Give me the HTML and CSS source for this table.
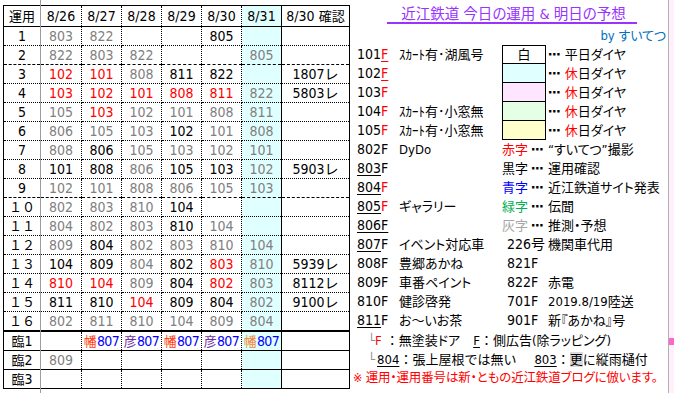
FILE: index.html
```html
<!DOCTYPE html>
<html lang="ja">
<head>
<meta charset="utf-8">
<title>近江鉄道 今日の運用 &amp; 明日の予想</title>
<link rel="stylesheet" href="styles.css">
</head>
<body>
<div class="page">
  <table class="unyo">
    <colgroup>
      <col class="c0"><col class="c1"><col class="cd"><col class="cd"><col class="cd"><col class="cd"><col class="cy"><col class="cc">
    </colgroup>
    <thead>
      <tr><th><span class="j">運用</span></th><th>8/26</th><th>8/27</th><th>8/28</th><th>8/29</th><th>8/30</th><th>8/31</th><th>8/30 <span class="j">確認</span></th></tr>
    </thead>
    <tbody>
      <tr><td>1</td><td class="g">803</td><td class="g">822</td><td></td><td></td><td>805</td><td></td><td></td></tr>
      <tr class="dash"><td>2</td><td class="g">822</td><td class="g">803</td><td class="g">822</td><td></td><td></td><td class="g">805</td><td></td></tr>
      <tr><td>3</td><td class="r">102</td><td class="r">101</td><td class="g">808</td><td>811</td><td>822</td><td></td><td>1807レ</td></tr>
      <tr><td>4</td><td class="r">103</td><td class="r">102</td><td class="r">101</td><td class="r">808</td><td class="r">811</td><td class="g">822</td><td>5803レ</td></tr>
      <tr><td>5</td><td class="g">105</td><td class="r">103</td><td class="g">102</td><td class="g">101</td><td class="g">808</td><td class="g">811</td><td></td></tr>
      <tr><td>6</td><td class="g">806</td><td class="g">105</td><td class="g">103</td><td>102</td><td class="g">101</td><td class="g">808</td><td></td></tr>
      <tr><td>7</td><td class="g">808</td><td>806</td><td class="g">105</td><td class="g">103</td><td class="g">102</td><td class="g">101</td><td></td></tr>
      <tr><td>8</td><td>101</td><td>808</td><td class="g">806</td><td>105</td><td>103</td><td class="g">102</td><td>5903レ</td></tr>
      <tr class="dash"><td>9</td><td class="g">102</td><td class="g">101</td><td class="g">808</td><td class="g">806</td><td class="g">105</td><td class="g">103</td><td></td></tr>
      <tr><td><span class="j">１０</span></td><td class="g">802</td><td class="g">803</td><td class="g">810</td><td>104</td><td></td><td></td><td></td></tr>
      <tr><td><span class="j">１１</span></td><td class="g">804</td><td class="g">802</td><td class="g">803</td><td>810</td><td class="g">104</td><td></td><td></td></tr>
      <tr><td><span class="j">１２</span></td><td class="g">809</td><td>804</td><td class="g">802</td><td class="g">803</td><td class="g">810</td><td class="g">104</td><td></td></tr>
      <tr><td><span class="j">１３</span></td><td>104</td><td>809</td><td class="g">804</td><td>802</td><td class="r">803</td><td class="g">810</td><td>5939レ</td></tr>
      <tr><td><span class="j">１４</span></td><td class="r">810</td><td class="r">104</td><td class="g">809</td><td>804</td><td class="r">802</td><td class="g">803</td><td>8112レ</td></tr>
      <tr><td><span class="j">１５</span></td><td>811</td><td>810</td><td class="r">104</td><td>809</td><td>804</td><td class="g">802</td><td>9100レ</td></tr>
      <tr class="end"><td><span class="j">１６</span></td><td class="g">802</td><td class="g">811</td><td class="g">810</td><td class="g">104</td><td class="g">809</td><td class="g">804</td><td></td></tr>
      <tr class="rin"><td><span class="j">臨</span>1</td><td></td><td><span class="j o">幡</span><span class="b">807</span></td><td><span class="j p">彦</span><span class="b">807</span></td><td><span class="j o">幡</span><span class="b">807</span></td><td><span class="j p">彦</span><span class="b">807</span></td><td><span class="j o2">幡</span><span class="b">807</span></td><td></td></tr>
      <tr class="rin"><td><span class="j">臨</span>2</td><td class="g">809</td><td></td><td></td><td></td><td></td><td></td><td></td></tr>
      <tr class="rin"><td><span class="j">臨</span>3</td><td></td><td></td><td></td><td></td><td></td><td></td><td></td></tr>
    </tbody>
  </table>

  <div class="legend">
    <div class="title"><span>近江鉄道 今日の運用 &amp; 明日の予想</span></div>
    <div class="by">by すいてつ</div>

    <div class="no">101<span class="r ul">F</span></div><div class="ds">ｽｶｰﾄ有･湖風号</div><div class="box first bw">白</div><div class="tx"><span class="dots">⋯</span> 平日ダイヤ</div>
    <div class="no">102<span class="r ul">F</span></div><div class="ds"></div><div class="box bc"></div><div class="tx"><span class="dots">⋯</span> <span class="r">休</span>日ダイヤ</div>
    <div class="no">103<span class="r">F</span></div><div class="ds"></div><div class="box bp"></div><div class="tx"><span class="dots">⋯</span> <span class="r">休</span>日ダイヤ</div>
    <div class="no">104<span class="r">F</span></div><div class="ds">ｽｶｰﾄ有･小窓無</div><div class="box bg"></div><div class="tx"><span class="dots">⋯</span> <span class="r">休</span>日ダイヤ</div>
    <div class="no">105<span class="r">F</span></div><div class="ds">ｽｶｰﾄ有･小窓無</div><div class="box by2"></div><div class="tx"><span class="dots">⋯</span> <span class="r">休</span>日ダイヤ</div>

    <div class="no">802F</div><div class="ds">DyDo</div><div class="c3"><span class="r">赤字</span><span class="dots">⋯</span></div><div class="tx">“すいてつ”撮影</div>
    <div class="no"><span class="ul">803</span>F</div><div class="ds"></div><div class="c3">黒字<span class="dots">⋯</span></div><div class="tx">運用確認</div>
    <div class="no"><span class="ul">804</span><span class="r">F</span></div><div class="ds"></div><div class="c3"><span class="b">青字</span><span class="dots">⋯</span></div><div class="tx">近江鉄道サイト発表</div>
    <div class="no"><span class="ul">805</span><span class="r">F</span></div><div class="ds">ギャラリー</div><div class="c3"><span class="gr">緑字</span><span class="dots">⋯</span></div><div class="tx">伝聞</div>
    <div class="no"><span class="ul">806F</span></div><div class="ds"></div><div class="c3"><span class="lg">灰字</span><span class="dots">⋯</span></div><div class="tx">推測・予想</div>

    <div class="no"><span class="ul">807</span>F</div><div class="ds">イベント対応車</div><div class="c3 num">226号</div><div class="tx">機関車代用</div>
    <div class="no">808F</div><div class="ds">豊郷あかね</div><div class="c3 num">821F</div><div class="tx"></div>
    <div class="no">809F</div><div class="ds">車番ペイント</div><div class="c3 num">822F</div><div class="tx">赤電</div>
    <div class="no">810F</div><div class="ds">健診啓発</div><div class="c3 num">701F</div><div class="tx">2019.8/19陸送</div>
    <div class="no"><span class="ul">811</span>F</div><div class="ds">お～いお茶</div><div class="c3 num">901F</div><div class="tx">新『あかね』号</div>

    <div class="note"><span class="gy">└</span><span class="r">F</span><span class="col c1">：</span>無塗装ドア<span class="gap"></span><span class="ul">F</span><span class="col">：</span>側広告(除ラッピング)</div>
    <div class="note n2"><span class="gy">└</span><span class="ul">804</span><span class="col">：</span>張上屋根では無い<span class="gap2"></span><span class="ul">803</span><span class="col">：</span><span class="hl">更</span>に縦雨樋付</div>
    <div class="warn">※ 運用・運用番号は新・ともの近江鉄道ブログに倣います。</div>
  </div>

  <div class="strip"><span class="mark"></span></div>
</div>
</body>
</html>
```

FILE: styles.css
```css
* { box-sizing: border-box; }
html, body { margin: 0; background: #fff; }
body {
  width: 674px;
  height: 393px;
  overflow: hidden;
  font-family: "DejaVu Sans Condensed", "Noto Sans CJK JP", sans-serif;
  color: #000;
}
.page {
  position: relative;
  display: flex;
  align-items: flex-start;
  height: 393px;
  padding: 5px 0 0 3px;
}
.page::before {
  content: "";
  position: absolute;
  left: 40px;
  top: 0;
  bottom: 0;
  width: 1px;
  background: #9c9c9c;
}

/* ---------- table ---------- */
.unyo {
  flex: 0 0 346px;
  width: 346px;
  border-collapse: collapse;
  table-layout: fixed;
  border: 1px solid #000;
  font-size: 14px;
}
.unyo col.c0 { width: 37px; }
.unyo col.c1 { width: 41px; }
.unyo col.cd { width: 40px; }
.unyo col.cy { width: 40px; background: #e0ffff; }
.unyo col.cc { width: 68px; }
.unyo th, .unyo td {
  padding: 0;
  height: 19px;
  line-height: 17px;
  text-align: center;
  vertical-align: middle;
  white-space: nowrap;
  font-weight: normal;
  border: 1px dotted #000;
}
.unyo thead th { height: 21px; border-top: 1px solid #000; border-bottom: 1px solid #000; }
.unyo tr > :first-child { border-left: 1px solid #000; border-right: 1px solid #9c9c9c; }
.unyo tr > :nth-child(7) { border-right: 1px solid #000; }
.unyo tr > :last-child { border-right: 1px solid #000; }
.unyo tr.dash > * { border-bottom: 1px dashed #000; }
.unyo tr.end > * { border-bottom: 2px solid #000; }
.unyo tr.rin > * { border-bottom: 1px solid #000; height: 18.5px; }
.unyo tr.rin .b { letter-spacing: -0.6px; }

.j { font-family: "Noto Sans CJK JP", sans-serif; font-size: 13px; }
.g { color: #808080; }
.r { color: #ff0000; }
.b { color: #0000ff; }
.p { color: #7030a0; }
.o { color: #ff4518; }
.o2 { color: #f28a3c; }
.gr { color: #00b050; }
.lg { color: #a6a6a6; }
.gy { color: #8c8c8c; }
.ul { text-decoration: underline; text-underline-offset: 2px; }

/* ---------- legend ---------- */
.legend {
  flex: 0 0 318px;
  display: grid;
  grid-template-columns: 46px 103px 44px 1fr;
  grid-template-rows: 21px repeat(19, 19px);
  padding-left: 3px;
  font-size: 13.5px;
  line-height: 19px;
  white-space: nowrap;
}
.legend > div { font-feature-settings: "palt"; }
.title {
  grid-column: 1 / -1;
  padding-left: 34px;
}
.title span {
  display: block;
  width: 250px;
  height: 19px;
  padding: 1px 0 0 3px;
  line-height: 16px;
  text-align: center;
  color: #9933ff;
  font-size: 14.5px;
  border-bottom: 2px solid #9933ff;
}
.by {
  grid-column: 1 / -1;
  justify-self: end;
  padding-right: 2px;
  color: #0070c0;
  font-size: 13px;
}
.no { padding-left: 4px; font-size: 14px; }
.ds { font-size: 13px; }
.box {
  border: 1px solid #000;
  border-top: 0;
  text-align: center;
  line-height: 18px;
  font-size: 13px;
}
.box.first { border-top: 1px solid #000; line-height: 17px; }
.bw { background: #fff; }
.bc { background: #e0ffff; }
.bp { background: #ffe5ff; }
.bg { background: #e5ffe5; }
.by2 { background: #ffffcc; }
.tx { padding-left: 2px; font-size: 13px; }
.c3 { font-size: 13px; }
.c3.num { padding-left: 5px; font-size: 14px; }
.dots {
  font-family: "DejaVu Sans", sans-serif;
  font-weight: bold;
  font-size: 13px;
  margin-left: 3px;
}
.tx .dots { margin-left: 0; }
.note {
  grid-column: 1 / -1;
  padding-left: 15px;
  font-size: 13px;
}
.legend > .note.n2 { font-feature-settings: normal; }
.n2 .gy { margin-right: 2px; }
.col {
  display: inline-block;
  width: 13px;
  text-align: center;
  font-family: "Noto Sans CJK JP", sans-serif;
}
.col.c1 { margin-left: 4px; }
.gap { display: inline-block; width: 13px; }
.gap2 { display: inline-block; width: 18px; }
.hl { background: #d9d9d9; }
.warn {
  grid-column: 1 / -1;
  color: #ff0000;
  font-size: 12.5px;
  letter-spacing: -0.15px;
}

/* ---------- right edge ---------- */
.strip {
  flex: 0 0 7px;
  align-self: stretch;
  margin-top: -5px;
  display: flex;
  flex-direction: column;
  border-left: 1px solid #b0b0b0;
  background: #fff0fb;
}
.mark {
  display: block;
  margin-top: 338px;
  height: 7px;
  background: #ff66cc;
}
```
